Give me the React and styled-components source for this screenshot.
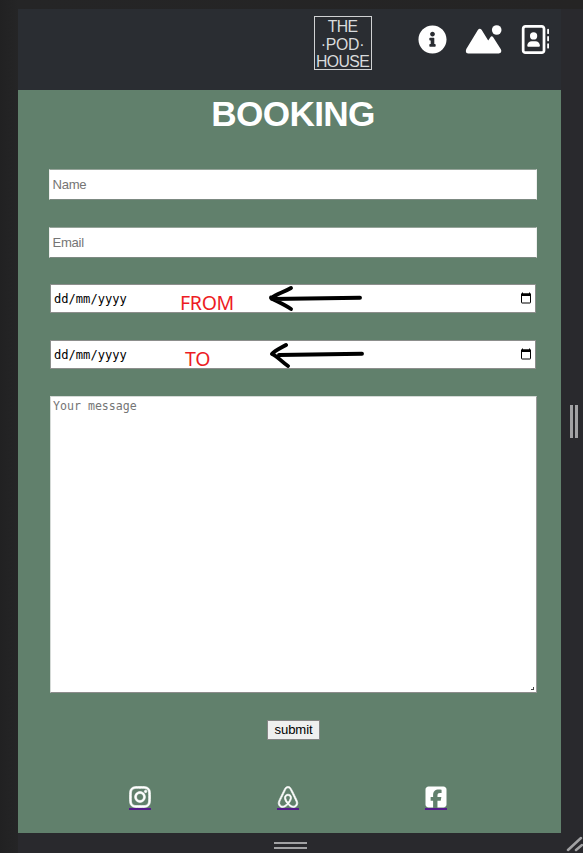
import React from "react";
import styled, { createGlobalStyle } from "styled-components";
import { FaInfoCircle } from "react-icons/fa";
import { FaRegAddressBook, FaInstagram, FaAirbnb, FaSquareFacebook } from "react-icons/fa6";

const GlobalStyle = createGlobalStyle`
  * { box-sizing: border-box; }
  body { margin: 0; background: #232324; font-family: "Liberation Sans", Arial, sans-serif; }
`;

const Viewport = styled.div`
  display: grid;
  grid-template-columns: 543px 22px;
  grid-template-rows: 824px 20px;
  width: 583px;
  height: 853px;
  padding: 9px 0 0 18px;
  overflow: hidden;
  background: linear-gradient(90deg, #212122, #252526 18px, #252424);
`;

const Page = styled.div`
  display: flex;
  flex-direction: column;
  background: #61806c;
`;

const Navbar = styled.header`
  display: flex;
  align-items: flex-start;
  height: 81px;
  padding: 7px 11px 0 296px;
  background: #2a2d32;
`;

const Logo = styled.div`
  display: flex;
  flex-direction: column;
  align-items: center;
  width: 58px;
  height: 54px;
  padding-top: 1px;
  border: 1px solid #d0d2d3;
  color: #d9dbdc;
  line-height: 17.5px;
  white-space: nowrap;
`;

const LogoLine = styled.span`
  font-size: 15.8px;
  letter-spacing: ${(p) => p.$spacing}px;
  margin-left: -1px;
`;

const NavIcons = styled.nav`
  display: flex;
  justify-content: space-between;
  width: 131px;
  margin: 9px 0 0 46px;
  color: #fff;
  svg { display: block; }
`;

const Title = styled.h1`
  margin: 4px 0 0 7px;
  color: #fff;
  font-size: 35.2px;
  font-weight: 700;
  line-height: 40px;
  letter-spacing: -0.65px;
  text-align: center;
`;

const Form = styled.form`
  display: flex;
  flex-direction: column;
  padding: 35px 24px 0 31px;
`;

const TextInput = styled.input`
  width: 488px;
  height: 31px;
  margin-bottom: ${(p) => p.$gap}px;
  padding: 0 2.5px;
  border: 1px solid;
  border-color: #96a49a #eeefee #7c8981 #eeefee;
  border-radius: 0;
  outline: 0;
  font: 13.1px "Liberation Sans", Arial, sans-serif;
  letter-spacing: -0.3px;
  &::placeholder { color: #757575; opacity: 1; }
`;

const DateField = styled.div`
  position: relative;
  display: flex;
  align-items: center;
  justify-content: space-between;
  width: 486px;
  height: 29px;
  margin: 0 0 27px 1px;
  padding: 0 3px;
  border: 1px solid #8c8e8c;
  background: #fff;
  color: #000;
  font: 12.1px "DejaVu Sans Mono", "Liberation Mono", monospace;
`;

const Note = styled.span`
  position: absolute;
  left: ${(p) => p.$left}px;
  top: 5px;
  color: #ed1c24;
  font: 19.5px/26px "Noto Sans", sans-serif;
  letter-spacing: -0.3px;
`;

const Arrow = styled.svg`
  position: absolute;
  left: ${(p) => p.$left}px;
  top: 0;
`;

const Message = styled.textarea`
  width: 487px;
  height: 297px;
  margin: 0 0 0 1px;
  padding: 1px 2px;
  border: 1px solid;
  border-color: #d5dad7 #999 #8c8c8c #d5dad7;
  border-radius: 0;
  outline: 0;
  resize: none;
  font: 11.6px/17px "DejaVu Sans Mono", "Liberation Mono", monospace;
  &::placeholder { color: #757575; opacity: 1; }
`;

const MessageBox = styled.div`
  position: relative;
  height: 297px;
`;

const ResizeMark = styled.svg`
  position: absolute;
  right: 3px;
  bottom: 3px;
`;

const Submit = styled.button`
  align-self: center;
  width: 53px;
  height: 20px;
  margin: 27px 0 0 1px;
  padding: 0;
  border: 1px solid #858585;
  background: #efefef;
  color: #000;
  font: 13.1px/16px "Liberation Sans", Arial, sans-serif;
  letter-spacing: -0.1px;
`;

const Socials = styled.footer`
  display: flex;
  justify-content: space-between;
  width: 318px;
  margin: 46px 0 0 111px;
`;

const SocialLink = styled.a`
  display: flex;
  flex-direction: column;
  align-items: center;
  width: 22px;
  height: 24px;
  overflow: hidden;
  color: #fff;
  border-bottom: 2px solid #551a8b;
  svg {
    flex: none;
    width: 24px;
    height: 24px;
    margin-top: -1px;
    stroke: #fff;
    stroke-width: ${(p) => p.$weight || 0};
  }
`;

const Rail = styled.div`
  display: flex;
  align-items: center;
  justify-content: center;
  background: #29292d;
`;

const BottomRail = styled(Rail)`
  grid-column: 1 / -1;
  height: 20px;
  position: relative;
`;

const Grip = styled.div`
  width: ${(p) => (p.$vertical ? 8 : 33)}px;
  height: ${(p) => (p.$vertical ? 33 : 7)}px;
  border: solid #a2a2a4;
  border-width: ${(p) => (p.$vertical ? "0 3px" : "2px 0")};
  margin: ${(p) => (p.$vertical ? "0 0 0 4px" : "5px 20px 0 0")};
`;

const Corner = styled.svg`
  position: absolute;
  right: 0;
  bottom: 0;
`;

const CalendarIcon = () => (
  <svg width="12" height="13" viewBox="0 0 12 13" aria-hidden="true">
    <path d="M2.5 .5v2M9.5 .5v2" stroke="#000" />
    <rect x="1.5" y="2" width="9" height="9" rx=".5" fill="none" stroke="#000" />
    <path d="M1 1.5h10v2.5H1z" />
  </svg>
);

const MountainIcon = () => (
  <svg width="37" height="29" viewBox="0 0 37 29" fill="currentColor" aria-hidden="true">
    <circle cx="31.7" cy="5" r="4.8" />
    <path d="M13 4.8Q14.8 2.8 16.6 4.8L23.2 15.6 25.4 12.2Q26.8 10.5 28.2 12.3L36 24.6Q37.2 28.2 33.8 28.6H3.2Q-.2 28 1.3 24Z" />
  </svg>
);

const ARROWS = [
  "M140 12.8L52 14M71 3C64 7 57 9 51 13C56 16 64 19 71 24M51 12.5L57 15",
  "M141 12.8L58 14M65 4C60 7 54 9 51 13C56 15 61 21 67 25",
];

function DateRow({ note, left, arrowLeft, path }) {
  return (
    <DateField>
      <span>dd/mm/yyyy</span>
      <CalendarIcon />
      <Note $left={left}>{note}</Note>
      <Arrow $left={arrowLeft} width="100" height="27" viewBox="48 0 100 27" fill="none" stroke="#000" strokeWidth="3.9" strokeLinecap="round" strokeLinejoin="round">
        <path d={path} />
      </Arrow>
    </DateField>
  );
}

export default function App() {
  return (
    <>
      <GlobalStyle />
      <Viewport>
        <Page>
          <Navbar>
            <Logo>
              <LogoLine $spacing={-0.7}>THE</LogoLine>
              <LogoLine $spacing={-0.3}>·POD·</LogoLine>
              <LogoLine $spacing={-0.6}>HOUSE</LogoLine>
            </Logo>
            <NavIcons>
              <FaInfoCircle size={29} />
              <MountainIcon />
              <FaRegAddressBook size={29} />
            </NavIcons>
          </Navbar>
          <Title>BOOKING</Title>
          <Form onSubmit={(e) => e.preventDefault()}>
            <TextInput placeholder="Name" $gap={27} />
            <TextInput placeholder="Email" $gap={26} />
            <DateRow note="FROM" left={129} arrowLeft={217} path={ARROWS[0]} />
            <DateRow note="TO" left={134} arrowLeft={218} path={ARROWS[1]} />
            <MessageBox>
              <Message placeholder="Your message" />
              <ResizeMark width="3" height="3"><path d="M3 0v3H0V2h2V0z" fill="#444" /></ResizeMark>
            </MessageBox>
            <Submit type="submit">submit</Submit>
          </Form>
          <Socials>
            <SocialLink href="#" $weight={14}><FaInstagram /></SocialLink>
            <SocialLink href="#" $weight={14}><FaAirbnb /></SocialLink>
            <SocialLink href="#"><FaSquareFacebook /></SocialLink>
          </Socials>
        </Page>
        <Rail><Grip $vertical /></Rail>
        <BottomRail>
          <Grip />
          <Corner width="18" height="18" stroke="#a2a2a4" strokeWidth="2.5" strokeLinecap="round">
            <path d="M3 15L16 3M11 15L17 10" />
          </Corner>
        </BottomRail>
      </Viewport>
    </>
  );
}
